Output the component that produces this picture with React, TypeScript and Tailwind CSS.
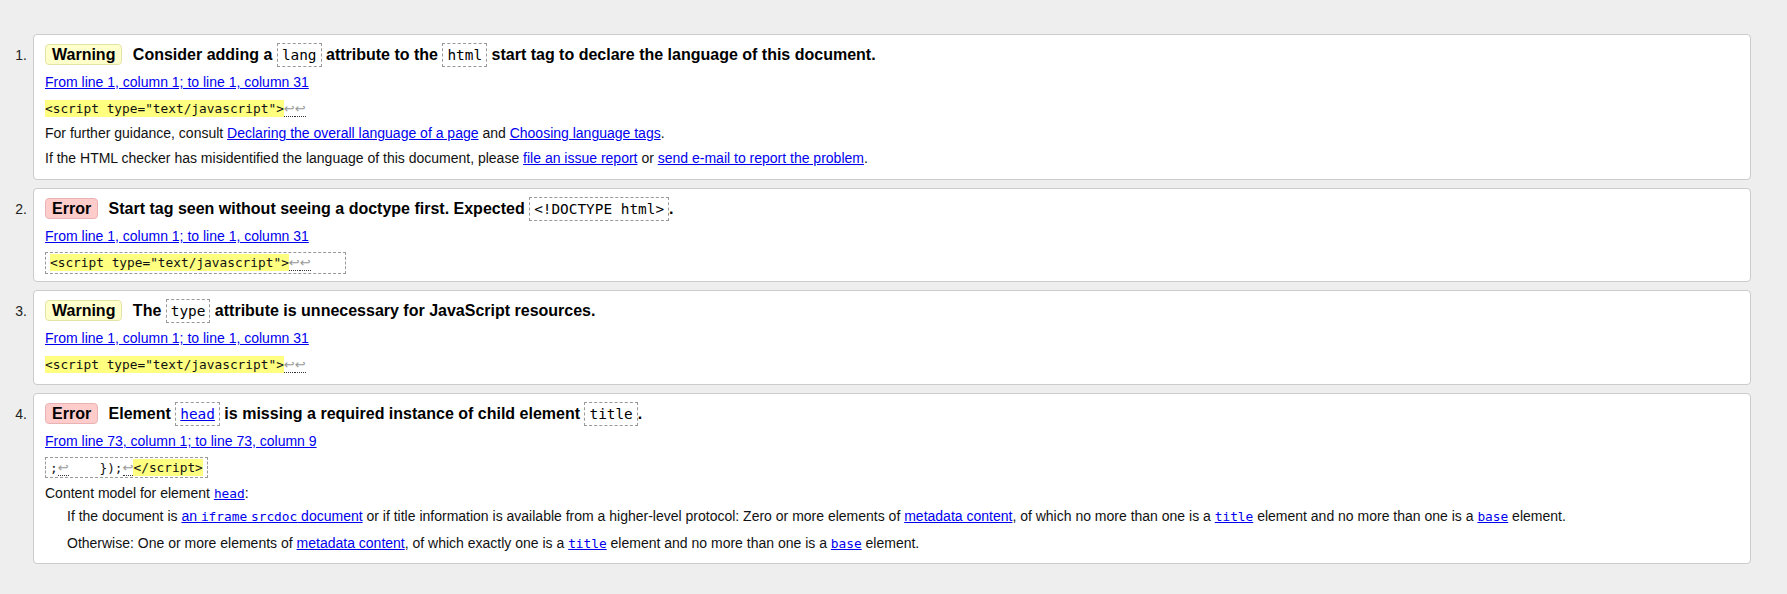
import React from "react";

const LINK = "text-[#0000ee] underline";

function Badge({ kind }: { kind: "Warning" | "Error" }) {
  return kind === "Warning" ? (
    <span className="inline-block rounded-[4px] border border-[#e3e3a6] bg-[#ffffcc] px-[6px] leading-[19px] align-baseline">
      Warning
    </span>
  ) : (
    <span className="inline-block rounded-[4px] border border-[#e9b3b3] bg-[#ffcccc] px-[6px] leading-[19px] align-baseline">
      Error
    </span>
  );
}

function HCode({ children, link }: { children: React.ReactNode; link?: boolean }) {
  return (
    <span className="inline-block border border-dashed border-[#999] px-[4px] leading-[22px] font-normal font-['DejaVu_Sans_Mono',monospace] text-[14.4px]">
      {link ? <a className={LINK}>{children}</a> : children}
    </span>
  );
}

function LF() {
  return (
    <span className="font-['DejaVu_Sans',sans-serif] text-[13px] text-[#999] border-b border-dotted border-[#333]">
      ↩
    </span>
  );
}

function Hl({ children }: { children: React.ReactNode }) {
  return <span className="bg-[#ffff80] py-[1px]">{children}</span>;
}

function MonoLink({ children }: { children: React.ReactNode }) {
  return (
    <a className={`${LINK} font-['DejaVu_Sans_Mono',monospace] text-[12.8px]`}>{children}</a>
  );
}

function Row({ n, pb, children }: { n: number; pb: string; children: React.ReactNode }) {
  return (
    <div className="flex">
      <div className="w-[33px] shrink-0 pr-[6px] pt-[7px] text-right text-[14px] leading-[28px] text-[#222]">
        {n}.
      </div>
      <div className={`flex-1 rounded-[4px] border border-[#ccc] bg-white pl-[11px] pr-[11px] pt-[6px] text-[14px] text-[#111] ${pb}`}>
        {children}
      </div>
    </div>
  );
}

function Heading({ children }: { children: React.ReactNode }) {
  return <div className="text-[16px] font-bold leading-[28px] text-black">{children}</div>;
}

function Loc({ children }: { children: React.ReactNode }) {
  return (
    <div className="leading-[27px]">
      <a className={LINK}>{children}</a>
    </div>
  );
}

function Extract({ children }: { children: React.ReactNode }) {
  return (
    <div className="leading-[25px] whitespace-pre font-['DejaVu_Sans_Mono',monospace] text-[12.8px]">
      {children}
    </div>
  );
}

export default function App() {
  return (
    <div className="min-h-[594px] bg-[#eeeeee] pt-[34px] pr-[36px] pb-[31px] font-['Liberation_Sans',Arial,sans-serif]">
      <div className="flex flex-col gap-[8px]">
        <Row n={1} pb="pb-[8px]">
          <Heading>
            <Badge kind="Warning" />
            <span className="ml-[6px]"> </span>
            Consider adding a <HCode>lang</HCode> attribute to the <HCode>html</HCode> start tag to declare the language of this document.
          </Heading>
          <Loc>From line 1, column 1; to line 1, column 31</Loc>
          <Extract>
            <Hl>{'<script type="text/javascript">'}</Hl>
            <LF />
            <LF />
          </Extract>
          <div className="leading-[25px]">
            For further guidance, consult <a className={LINK}>Declaring the overall language of a page</a> and{" "}
            <a className={LINK}>Choosing language tags</a>.
          </div>
          <div className="leading-[25px]">
            If the HTML checker has misidentified the language of this document, please{" "}
            <a className={LINK}>file an issue report</a> or <a className={LINK}>send e-mail to report the problem</a>.
          </div>
        </Row>

        <Row n={2} pb="pb-[6px]">
          <Heading>
            <Badge kind="Error" />
            <span className="ml-[6px]"> </span>
            Start tag seen without seeing a doctype first. Expected <HCode>{"<!DOCTYPE html>"}</HCode>.
          </Heading>
          <Loc>From line 1, column 1; to line 1, column 31</Loc>
          <Extract>
            <span className="inline-block border border-dashed border-[#999] px-[4px] leading-[20px]">
              <Hl>{'<script type="text/javascript">'}</Hl>
              <LF />
              <LF />
              {"    "}
            </span>
          </Extract>
        </Row>

        <Row n={3} pb="pb-[7px]">
          <Heading>
            <Badge kind="Warning" />
            <span className="ml-[6px]"> </span>
            The <HCode>type</HCode> attribute is unnecessary for JavaScript resources.
          </Heading>
          <Loc>From line 1, column 1; to line 1, column 31</Loc>
          <Extract>
            <Hl>{'<script type="text/javascript">'}</Hl>
            <LF />
            <LF />
          </Extract>
        </Row>

        <Row n={4} pb="pb-[6px]">
          <Heading>
            <Badge kind="Error" />
            <span className="ml-[6px]"> </span>
            Element <HCode link>head</HCode> is missing a required instance of child element <HCode>title</HCode>.
          </Heading>
          <Loc>From line 73, column 1; to line 73, column 9</Loc>
          <Extract>
            <span className="inline-block border border-dashed border-[#999] px-[4px] leading-[19px]">
              {";"}
              <LF />
              {"    });"}
              <LF />
              <Hl>{"</script>"}</Hl>
            </span>
          </Extract>
          <div className="leading-[26px]">
            Content model for element <MonoLink>head</MonoLink>:
          </div>
          <div className="pl-[22px] leading-[18px]">
            If the document is{" "}
            <a className={LINK}>
              an <span className="font-['DejaVu_Sans_Mono',monospace] text-[12.8px]">iframe</span>{" "}
              <span className="font-['DejaVu_Sans_Mono',monospace] text-[12.8px]">srcdoc</span> document
            </a>{" "}
            or if title information is available from a higher-level protocol: Zero or more elements of{" "}
            <a className={LINK}>metadata content</a>, of which no more than one is a <MonoLink>title</MonoLink> element
            and no more than one is a <MonoLink>base</MonoLink> element.
          </div>
          <div className="mt-[8px] mb-[4px] pl-[22px] leading-[18px]">
            Otherwise: One or more elements of <a className={LINK}>metadata content</a>, of which exactly one is a{" "}
            <MonoLink>title</MonoLink> element and no more than one is a <MonoLink>base</MonoLink> element.
          </div>
        </Row>
      </div>
    </div>
  );
}
